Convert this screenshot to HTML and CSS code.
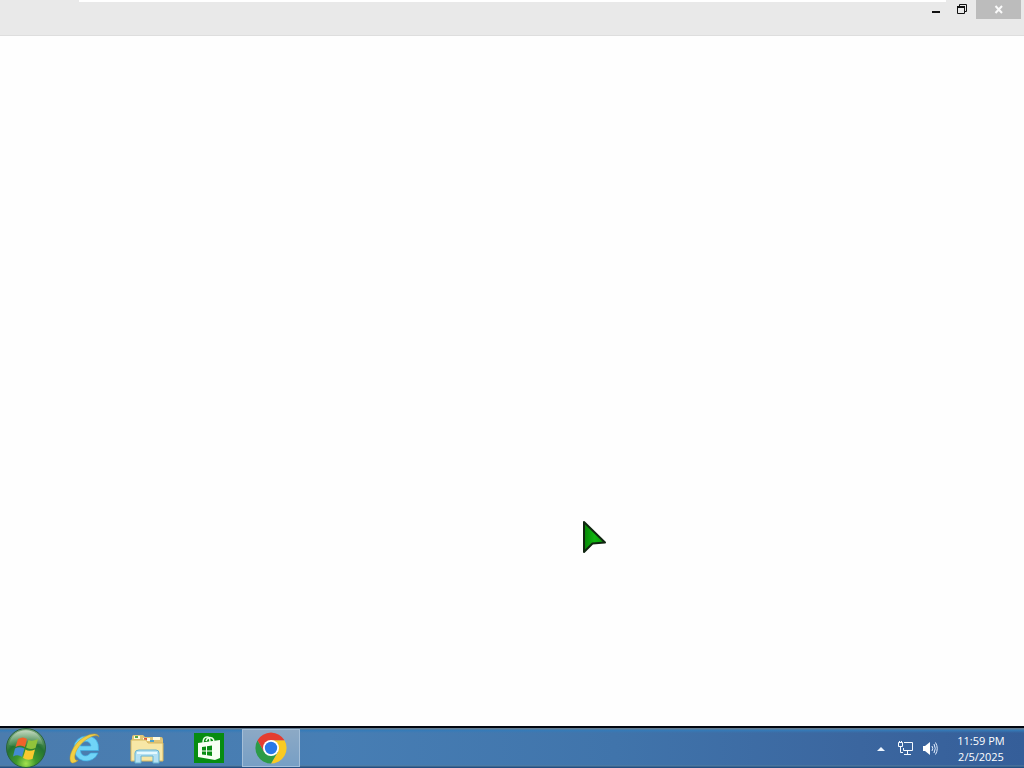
FILE: index.html
```html
<!DOCTYPE html>
<html lang="en">
<head>
<meta charset="utf-8">
<title>Desktop</title>
<link rel="stylesheet" href="styles.css">
</head>
<body class="desktop">
<header class="titlebar">
  <div class="tab-edge"></div>
  <div class="window-controls">
    <button class="control minimize" aria-label="Minimize"><svg width="26" height="19"><path d="M8 12H16" stroke="#111" stroke-width="2"/></svg></button>
    <button class="control" aria-label="Restore"><svg width="26" height="19" fill="none" stroke="#111"><path d="M9.500 6V4.500H16.500V11.500H15"/><path d="M7.500 6.500H14.500V13.500H7.500Z"/><path d="M7 7H15" stroke-width="2"/></svg></button>
    <button class="control close" aria-label="Close"><svg width="45" height="19"><path d="M19.500 6L26 13M26 6L19.500 13" stroke="#fafafa" stroke-width="2"/></svg></button>
  </div>
</header>
<main class="page">
  <svg class="cursor" width="26" height="36" viewBox="0 0 26 36"><defs><linearGradient id="cg"><stop offset="0" stop-color="#078507"/><stop offset=".5" stop-color="#10b510"/><stop offset="1" stop-color="#079807"/></linearGradient></defs><path d="M2 2V32L10.500 23.500L23 22.500Z" fill="url(#cg)" stroke="#102510" stroke-width="2" stroke-linejoin="round"/></svg>
</main>
<footer class="taskbar">
  <nav class="apps" aria-label="Taskbar">
    <button class="start" aria-label="Start">
      <svg width="42" height="40" viewBox="0 0 42 40">
        <defs><radialGradient id="orb" cx=".5" cy=".9" r=".85"><stop offset="0" stop-color="#a4e34d"/><stop offset=".3" stop-color="#3f982c"/><stop offset=".65" stop-color="#247332"/><stop offset="1" stop-color="#75a477"/></radialGradient><linearGradient id="shine" x2="0" y2="1"><stop offset="0" stop-color="#dcead7" stop-opacity=".75"/><stop offset="1" stop-color="#9ac89b" stop-opacity=".15"/></linearGradient></defs>
        <circle cx="21" cy="20" r="19.500" fill="url(#orb)" stroke="#28613b"/>
        <path d="M4 17C6-2 35-3 38 17C28 13 14 21 4 17Z" fill="url(#shine)"/>
        <path d="M13 11Q18 8 22 11L20 19Q15 16 10.500 19Z" fill="#f0622b"/>
        <path d="M23.500 12Q27 14 33 11L30.500 20Q25 22 21 19.500Z" fill="#91c43b"/>
        <path d="M10 20.500Q14 18 19.500 20.500L17 29Q13 26 8 28.500Z" fill="#438bd1"/>
        <path d="M20.500 21.500Q24 24 30 21.500L27.500 31Q22 33 18 30Z" fill="#f9c92f"/>
      </svg>
    </button>
    <button class="app" aria-label="Internet Explorer">
      <svg width="32" height="32" viewBox="0 0 32 32"><path d="M17 4A12.500 12.500 0 1 0 29 21H21.500Q18 25.500 13.500 23Q11.500 21.500 11.500 18.500H29.500Q30.500 4 17 4ZM11.500 14Q12.500 9.500 17 9.500Q21 9.500 22 14Z" fill="#70d4f7" stroke="#3eaee3" stroke-width=".7" fill-rule="evenodd"/><path d="M30 5C29-1 16 2 8 11C1 19-1 29 3 31C4.500 31.500 7 30 9 28.500C4.500 29 4.500 22 10 14.500C17 6 27 1 30 5Z" fill="#f2cf43" stroke="#c49b28" stroke-width=".5"/></svg>
    </button>
    <button class="app" aria-label="File Explorer">
      <svg width="34" height="32" viewBox="0 0 34 32"><path d="M2 5Q2 3 4 3H13L15 5H31Q33 5 33 8V28H2Z" fill="#e0c578"/><path d="M4 4H10V7H4ZM13 6H20V9H13ZM23 5H30V8H23Z" fill="#fffbe0"/><path d="M5 4H8V6H5Z" fill="#54a849"/><path d="M14 6H17V8H14Z" fill="#d65640"/><path d="M20 8H24V10H20Z" fill="#4da2cb"/><path d="M1 8H16L18 11H33V29H1Z" fill="#f7e7a6" stroke="#d8b75f"/><path d="M5 31V21Q5 18 9 18H26Q29 18 29 21V31H23V24H11V31Z" fill="#b4e1f3" stroke="#65b2d2"/><path d="M7 21H27" stroke="#e6faff" stroke-width="2"/></svg>
    </button>
    <button class="app" aria-label="Store">
      <svg width="30" height="30" viewBox="0 0 30 30"><path d="M0 0H30V30H0Z" fill="#078c12"/><path d="M4 10L26 7V25L21 27L4 24Z" fill="#f7fff4"/><path d="M9 10Q9 4 13 4Q16 4 16 9M12 8Q14 3 18 5Q20 6 20 9" fill="none" stroke="#edffe9" stroke-width="1.500"/><path d="M8 14L12 13.500V17.500H8ZM13 13.300L18 12.500V17.500H13ZM8 18.500H12V22L8 21.500ZM13 18.500H18V23L13 22.200Z" fill="#078c12"/></svg>
    </button>
    <button class="app active" aria-label="Chrome">
      <svg width="32" height="32" viewBox="0 0 32 32"><path d="M16 8.200H29.500A15.600 15.600 0 0 1 16 31.600L22.800 19.900Z" fill="#f9ca22"/><path d="M9.200 19.900L2.500 8.200A15.600 15.600 0 0 0 16 31.600L22.800 19.900Z" fill="#2c9b47"/><path d="M2.500 8.200L9.200 19.900L16 16V8.200H29.500Q25 1 16 .4Q7 .8 2.500 8.200Z" fill="#e43d30"/><circle cx="16" cy="16" r="8" fill="#fff"/><circle cx="16" cy="16" r="6.200" fill="#2878e8"/></svg>
    </button>
  </nav>
  <div class="tray">
    <button class="tray-button" aria-label="Show hidden icons"><svg width="12" height="20"><path d="M2 13L6 9L10 13Z" fill="#edf6ff"/></svg></button>
    <button class="tray-button" aria-label="Network"><svg width="18" height="20" viewBox="0 0 18 20" fill="none" stroke="#f6faff"><path d="M7 4.500H15.500V12.500H6.500V10M10.500 13V16M7 16.500H14M3.500 9V14.500H6"/><path d="M1.500 4.500H5.500V8.500H1.500ZM2.500 4V3M4.500 4V3"/></svg></button>
    <button class="tray-button" aria-label="Volume"><svg width="18" height="20" viewBox="0 0 18 20"><path d="M2 8H4L9 4V17L4 13H2Z" fill="#fff"/><path d="M11 8Q12.500 10.500 11 13M13 6Q15.500 10.500 13 15M14.500 4.500Q18 10.500 14.500 16.500" fill="none" stroke="#e3efff"/></svg></button>
    <button class="clock"><time datetime="23:59">11:59 PM</time><time datetime="2025-02-05">2/5/2025</time></button>
  </div>
</footer>
</body>
</html>
```
FILE: styles.css
```css
* { box-sizing: border-box; }
.desktop {
  display: flex;
  flex-direction: column;
  min-height: 100vh;
  margin: 0;
  background: #fefefe;
  font-family: "Open Sans", "Noto Sans", sans-serif;
}
button { border: 0; padding: 0; background: transparent; color: inherit; font: inherit; }
svg { display: block; }
.titlebar {
  display: flex;
  height: 36px;
  padding: 0 3px 0 79px;
  background: #e9e9e9;
  border-bottom: 1px solid #dedede;
}
.tab-edge { flex: 1; height: 2px; background: #fff; }
.window-controls { display: flex; align-items: flex-start; }
.control { height: 19px; }
.minimize { background: linear-gradient(#fff, #fff) 0 0 / 22px 2px no-repeat; }
.close { background: #bcbcbc; }
.page { position: relative; flex: 1; background: #fefefe; }
.cursor { position: absolute; left: 582px; top: 484px; }
.taskbar {
  display: flex;
  justify-content: space-between;
  height: 42px;
  border-top: 2px solid #020610;
  background:
    linear-gradient(#627b91 0, #627b91 1px, #347bb9 2px, transparent 5px, transparent 37px, #557d9c 38px, #234f83 39px),
    linear-gradient(90deg, #4b7cae 0, #477eb4 32%, #4074ab 60%, #3b669f 84%, #355e99);
}
.apps { display: flex; align-items: center; padding-left: 5px; gap: 4px; }
.start { margin-right: 5px; }
.app {
  display: flex;
  align-items: center;
  justify-content: center;
  width: 58px;
  height: 38px;
  border: 1px solid transparent;
}
.active { border-color: #a4bfd9; background: linear-gradient(#8ca9c5, #779fc5); }
.tray { display: flex; align-items: center; gap: 6px; padding-right: 15px; color: #fff; }
.tray-button:first-child { margin-right: 4px; }
.clock { display: flex; flex-direction: column; align-items: center; width: 56px; margin-left: 8px; padding-top: 2px; font-size: 11px; line-height: 16px; white-space: nowrap; }
```
